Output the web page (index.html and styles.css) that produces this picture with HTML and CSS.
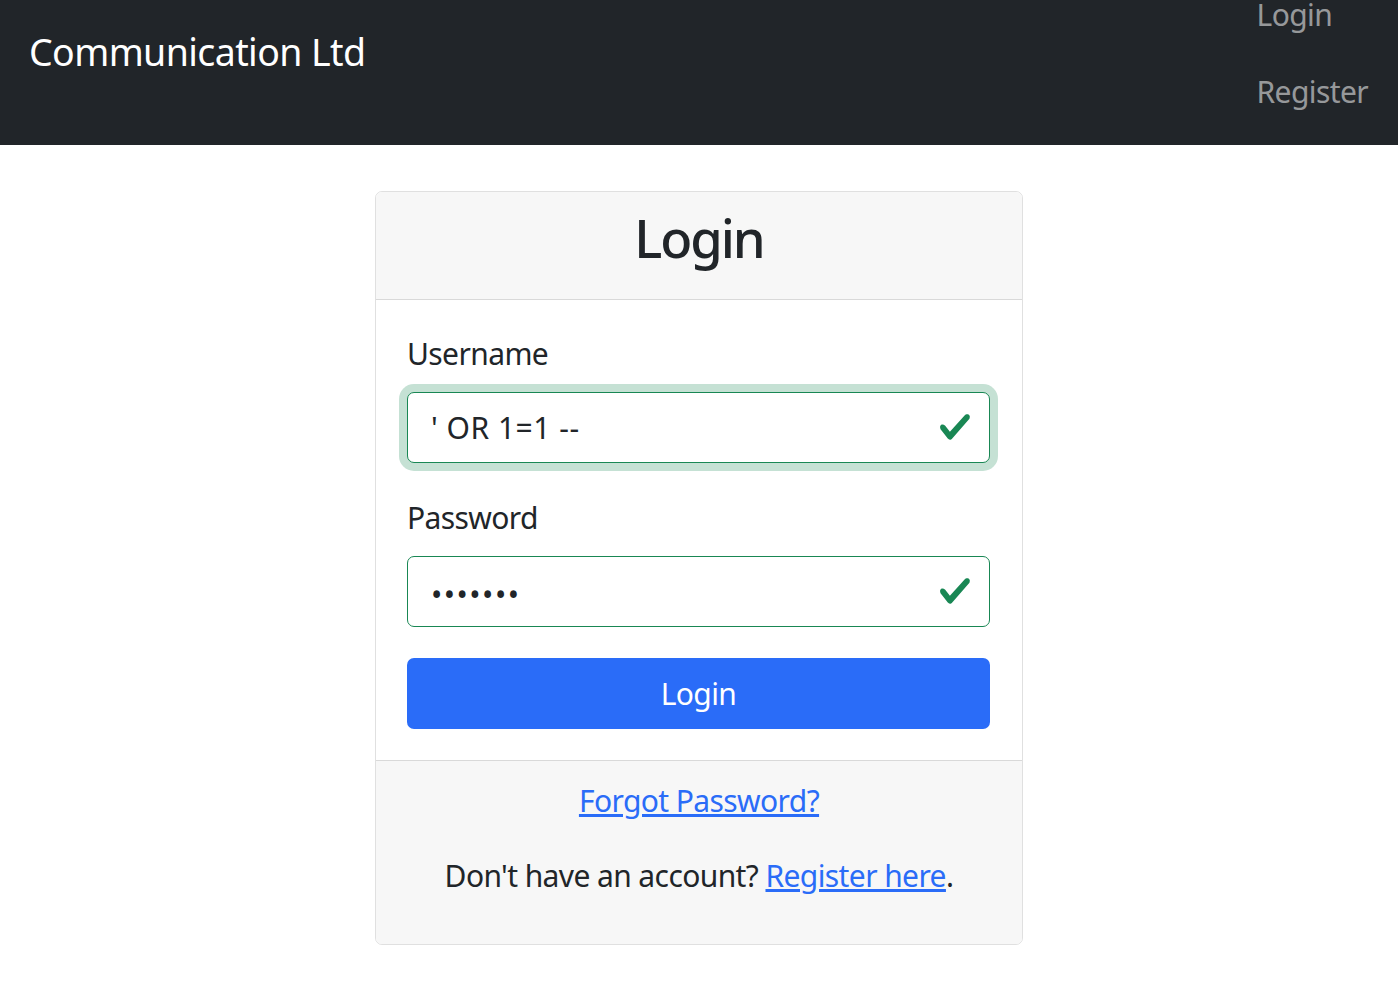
FILE: index.html
```html
<!DOCTYPE html>
<html lang="en">
<head>
<meta charset="utf-8">
<title>Login - Communication Ltd</title>
<link rel="stylesheet" href="styles.css">
</head>
<body>
<nav class="navbar">
  <a class="brand" href="#">Communication Ltd</a>
  <ul class="nav">
    <li><a class="nav-link" href="#">Login</a></li>
    <li><a class="nav-link" href="#">Register</a></li>
  </ul>
</nav>
<main class="main">
  <div class="card">
    <div class="card-header">
      <h3 class="title">Login</h3>
    </div>
    <form class="card-body">
      <div class="field">
        <label class="label" for="username">Username</label>
        <div class="input-wrap">
          <input class="input is-valid is-focused" id="username" type="text" value="' OR 1=1 --">
          <svg class="valid-icon" viewBox="0 0 8 8" width="34" height="34"><path fill="#198754" d="M2.3 6.73.6 4.53c-.4-1.04.46-1.4 1.1-.8l1.1 1.4 3.4-3.8c.6-.63 1.6-.27 1.2.7l-4 4.6c-.43.5-.8.4-1.1.1z"/></svg>
        </div>
      </div>
      <div class="field">
        <label class="label" for="password">Password</label>
        <div class="input-wrap">
          <input class="input is-valid password" id="password" type="password" value="1234567">
          <svg class="valid-icon" viewBox="0 0 8 8" width="34" height="34"><path fill="#198754" d="M2.3 6.73.6 4.53c-.4-1.04.46-1.4 1.1-.8l1.1 1.4 3.4-3.8c.6-.63 1.6-.27 1.2.7l-4 4.6c-.43.5-.8.4-1.1.1z"/></svg>
        </div>
      </div>
      <button class="btn" type="button">Login</button>
    </form>
    <div class="card-footer">
      <p class="footer-line"><a class="link" href="#">Forgot Password?</a></p>
      <p class="footer-line">Don't have an account? <a class="link" href="#">Register here</a>.</p>
    </div>
  </div>
</main>
<script src="script.js"></script>
</body>
</html>
```
FILE: styles.css
```css
body {
  margin: 0;
  font-family: "Noto Sans", "Open Sans", sans-serif;
  font-size: 30px;
  line-height: 1.5;
  letter-spacing: -0.02em;
  color: #212529;
  background: #fff;
}

.navbar {
  background: #212529;
  height: 145px;
  box-sizing: border-box;
  padding: 15px 30px 0 29px;
  display: flex;
  justify-content: space-between;
  align-items: flex-start;
}

.brand {
  color: #fff;
  font-size: 37.5px;
  line-height: 56px;
  padding: 9px 0;
  text-decoration: none;
}

.nav {
  list-style: none;
  margin: -39px 0 0;
  padding: 0;
  display: flex;
  flex-direction: column;
}

.nav-link {
  display: block;
  padding: 16px 0;
  line-height: 45px;
  color: rgba(255, 255, 255, 0.55);
  text-decoration: none;
}

.main {
  padding-top: 46px;
}

.card {
  width: 648px;
  margin: 0 auto;
  box-sizing: border-box;
  border: 1px solid rgba(0, 0, 0, 0.12);
  border-radius: 7px;
  overflow: hidden;
}

.card-header {
  background: #f7f7f7;
  padding: 14px 31px 15px;
  border-bottom: 1px solid rgba(0, 0, 0, 0.12);
  text-align: center;
}

.title {
  margin: 0 0 15px;
  font-size: 52.5px;
  line-height: 63px;
  font-weight: 500;
  letter-spacing: -0.04em;
}

.card-body {
  padding: 31px 32px 31px 31px;
  margin: 0;
}

.field {
  margin-bottom: 31px;
}

.field:first-child {
  margin-bottom: 32px;
}

.label {
  display: block;
  line-height: 45px;
  margin-bottom: 16px;
}

.input-wrap {
  position: relative;
}

.input {
  display: block;
  width: 100%;
  height: 71px;
  box-sizing: border-box;
  padding: 0 64px 0 23px;
  border: 1px solid #198754;
  border-radius: 7px;
  font-family: inherit;
  font-size: 30px;
  letter-spacing: 0.5px;
  color: #212529;
  background: #fff;
  outline: none;
}

.input.is-focused {
  box-shadow: 0 0 0 8px rgba(25, 135, 84, 0.25);
}

.input.password {
  letter-spacing: 1.5px;
  padding-top: 5px;
}

.valid-icon {
  position: absolute;
  right: 18px;
  top: 18px;
}

.btn {
  display: block;
  width: 100%;
  height: 71px;
  border: 0;
  border-radius: 7px;
  background: #2a6cf8;
  color: #fff;
  font-family: inherit;
  font-size: 30px;
  letter-spacing: -0.02em;
  cursor: pointer;
}

.card-footer {
  background: #f7f7f7;
  border-top: 1px solid rgba(0, 0, 0, 0.12);
  padding: 17px 31px 16px;
  text-align: center;
}

.footer-line {
  margin: 0 0 30px;
  line-height: 45px;
}

.link {
  color: #2a6cf8;
  text-decoration: underline;
}
```
FILE: script.js
```js
var u = document.getElementById('username');
u.focus();
u.setSelectionRange(u.value.length, u.value.length);
```
